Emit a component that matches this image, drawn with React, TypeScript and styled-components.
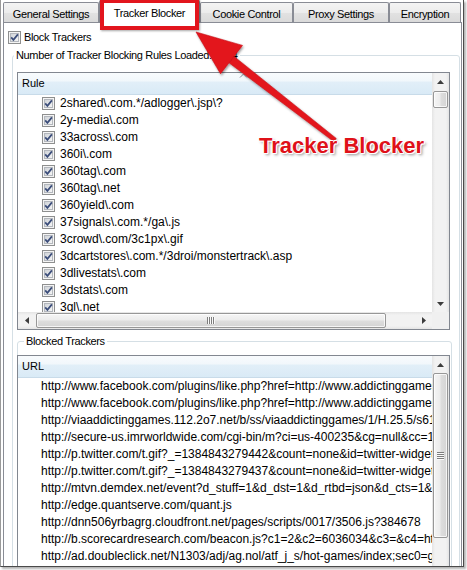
import React, { useId } from "react";
import styled, { createGlobalStyle } from "styled-components";

const UI_FONT = `"Liberation Sans", Arial, sans-serif`;

const GlobalStyle = createGlobalStyle`
  html, body { margin: 0; padding: 0; background: #fff; }
  body { font-family: ${UI_FONT}; font-size: 11px; letter-spacing: -0.35px; color: #000; }
  * { box-sizing: border-box; }
`;

const Stage = styled.div`
  position: relative;
  width: 467px;
  height: 570px;
  overflow: hidden;
  background: #fff;
`;

const Frame = styled.div`
  position: relative;
  z-index: 0;
  width: 464px;
  height: 567px;
  border-left: 1px solid #9a9a9a;
  border-right: 1px solid #4a4a4a;
  border-bottom: 1px solid #4a4a4a;
  background: #fff;
  box-shadow: 2px 2px 2px rgba(0, 0, 0, 0.3);
  overflow: hidden;
  display: flex;
  flex-direction: column;
`;

const TabStrip = styled.div`
  display: flex;
  align-items: flex-start;
  height: 22px;
  padding-left: 2px;
  position: relative;
  z-index: 1;
  flex: none;
`;

const Tab = styled.div<{ $w: number; $active?: boolean }>`
  flex: none;
  width: ${(p) => p.$w}px;
  height: ${(p) => (p.$active ? 23 : 20)}px;
  margin-top: ${(p) => (p.$active ? 0 : 2)}px;
  padding-top: ${(p) => (p.$active ? 1 : 2)}px;
  border: 1px solid #898c95;
  border-bottom: none;
  border-radius: 2px 2px 0 0;
  background: ${(p) =>
    p.$active
      ? "#fff"
      : "linear-gradient(#f4f4f4 0%, #ececec 50%, #e2e2e2 51%, #dadada 100%)"};
  display: flex;
  align-items: center;
  justify-content: center;
  white-space: nowrap;
`;

const Panel = styled.div`
  flex: none;
  height: 620px;
  margin: 0 1px 0 2px;
  border: 1px solid #898c95;
  background: #fff;
  padding: 8px 0 0 4px;
`;

const CheckRow = styled.label`
  display: flex;
  align-items: center;
  gap: 3px;
  height: 13px;
  line-height: 13px;
`;

const GroupBox = styled.fieldset`
  margin: 4px 0 0 4px;
  width: 448px;
  min-width: 0;
  border: 1px solid #d5dfe5;
  border-radius: 3px;
  padding: 9px 9px 0 4px;
`;

const GroupLegend = styled.legend<{ $indent: number }>`
  margin-left: ${(p) => p.$indent}px;
  padding: 0 2px;
  height: 15px;
  line-height: 15px;
`;

const SubGroup = styled.fieldset`
  margin: 4px 0 0 0;
  width: 435px;
  min-width: 0;
  border: 1px solid #d5dfe5;
  border-radius: 3px;
  padding: 6px 0 0 0;
`;

const ListBox = styled.div<{ $h: number; $hscroll?: boolean; $shift?: number }>`
  width: 433px;
  height: ${(p) => p.$h}px;
  margin-left: ${(p) => p.$shift ?? 0}px;
  border: 1px solid #828790;
  background: #fff;
  display: grid;
  grid-template-columns: minmax(0, 1fr) 17px;
  grid-template-rows: ${(p) => (p.$hscroll ? "minmax(0, 1fr) 17px" : "minmax(0, 1fr)")};
`;

const ListContent = styled.div`
  overflow: hidden;
  min-width: 0;
  min-height: 0;
  font-size: 12px;
  letter-spacing: 0;
`;

const ColumnHeader = styled.div`
  position: relative;
  height: 22px;
  padding-left: 4px;
  font-size: 11px;
  line-height: 21px;
  border-bottom: 1px solid #c8dbe9;
  background: linear-gradient(#f8fbfd 0%, #f1f7fb 40%, #e2eff8 41%, #d9eaf6 100%);
  white-space: nowrap;
`;

const SortGlyph = styled.svg`
  position: absolute;
  top: 0;
  left: 221px;
`;

const RuleRow = styled.div`
  display: flex;
  align-items: center;
  gap: 5px;
  height: 17px;
  line-height: 17px;
  padding-left: 24px;
  white-space: nowrap;
`;

const UrlRow = styled.div`
  height: 17px;
  line-height: 17px;
  padding-left: 23px;
  white-space: nowrap;
`;

const VScroll = styled.div`
  display: flex;
  flex-direction: column;
  min-height: 0;
  overflow: hidden;
  background: linear-gradient(90deg, #e4e4e4 0, #f2f2f2 3px, #f2f2f2 14px, #e4e4e4 17px);
`;

const HScroll = styled.div`
  display: flex;
  min-width: 0;
  overflow: hidden;
  background: linear-gradient(#e4e4e4 0, #f2f2f2 3px, #f2f2f2 14px, #e4e4e4 17px);
`;

const Corner = styled.div`
  background: #f0f0f0;
`;

const ScrollButton = styled.div`
  flex: 0 0 17px;
  display: flex;
  align-items: center;
  justify-content: center;
`;

const Spacer = styled.div`
  flex: 1;
`;

const VThumb = styled.div<{ $offset: number; $size: number }>`
  flex: none;
  margin: ${(p) => p.$offset}px 1px 0;
  height: ${(p) => p.$size}px;
  border: 1px solid #979797;
  border-radius: 2px;
  background: linear-gradient(90deg, #f5f5f5 0%, #ececec 45%, #dddddd 55%, #d4d4d4 100%);
  box-shadow: inset 0 0 0 1px rgba(255, 255, 255, 0.75);
  display: flex;
  align-items: center;
  justify-content: center;
`;

const HThumb = styled.div<{ $offset: number; $size: number }>`
  flex: none;
  margin: 1px 0 1px ${(p) => p.$offset}px;
  width: ${(p) => p.$size}px;
  border: 1px solid #979797;
  border-radius: 2px;
  background: linear-gradient(#f5f5f5 0%, #ececec 45%, #dddddd 55%, #d4d4d4 100%);
  box-shadow: inset 0 0 0 1px rgba(255, 255, 255, 0.75);
  display: flex;
  align-items: center;
  justify-content: center;
`;

const RedBox = styled.div`
  position: absolute;
  z-index: 2;
  left: 100px;
  top: -1px;
  width: 99px;
  height: 31px;
  border: 4px solid #e2151d;
  box-shadow: 1px 1px 2px rgba(0, 0, 0, 0.35);
  pointer-events: none;
`;

const ArrowLayer = styled.svg`
  position: absolute;
  z-index: 2;
  left: 0;
  top: 0;
  pointer-events: none;
`;

const Callout = styled.div`
  position: absolute;
  z-index: 3;
  left: 259px;
  top: 135px;
  font-family: "Liberation Sans", Arial, sans-serif;
  font-weight: bold;
  font-size: 22px;
  line-height: 22px;
  letter-spacing: 0;
  color: #df1119;
  white-space: nowrap;
  text-shadow: 1px 0 0 #fff, -1px 0 0 #fff, 0 1px 0 #fff, 0 -1px 0 #fff,
    1px 1px 0 #fff, -1px -1px 0 #fff, 2px 2px 3px rgba(0, 0, 0, 0.45);
`;

const rules = [
  "2shared\\.com.*/adlogger\\.jsp\\?",
  "2y-media\\.com",
  "33across\\.com",
  "360i\\.com",
  "360tag\\.com",
  "360tag\\.net",
  "360yield\\.com",
  "37signals\\.com.*/ga\\.js",
  "3crowd\\.com/3c1px\\.gif",
  "3dcartstores\\.com.*/3droi/monstertrack\\.asp",
  "3dlivestats\\.com",
  "3dstats\\.com",
  "3gl\\.net",
];

const urls = [
  "http://www.facebook.com/plugins/like.php?href=http://www.addictinggames.com/&layout=button_count",
  "http://www.facebook.com/plugins/like.php?href=http://www.addictinggames.com/&send=false",
  "http://viaaddictinggames.112.2o7.net/b/ss/viaaddictinggames/1/H.25.5/s61234",
  "http://secure-us.imrworldwide.com/cgi-bin/m?ci=us-400235&cg=null&cc=1",
  "http://p.twitter.com/t.gif?_=1384843279442&count=none&id=twitter-widget-0",
  "http://p.twitter.com/t.gif?_=1384843279437&count=none&id=twitter-widget-1",
  "http://mtvn.demdex.net/event?d_stuff=1&d_dst=1&d_rtbd=json&d_cts=1&d_cb=x",
  "http://edge.quantserve.com/quant.js",
  "http://dnn506yrbagrg.cloudfront.net/pages/scripts/0017/3506.js?384678",
  "http://b.scorecardresearch.com/beacon.js?c1=2&c2=6036034&c3=&c4=http",
  "http://ad.doubleclick.net/N1303/adj/ag.nol/atf_j_s/hot-games/index;sec0=games",
];

const tabs = [
  { label: "General Settings", w: 96 },
  { label: "Tracker Blocker", w: 101, active: true },
  { label: "Cookie Control", w: 93 },
  { label: "Proxy Settings", w: 96 },
  { label: "Encryption", w: 72 },
];

function CheckBox() {
  const id = useId().replace(/:/g, "");
  return (
    <svg width="13" height="13" viewBox="0 0 13 13" style={{ flex: "none" }}>
      <defs>
        <linearGradient id={`cb${id}`} x1="0" y1="0" x2="1" y2="1">
          <stop offset="0" stopColor="#cdd1d6" />
          <stop offset="1" stopColor="#f7f7f7" />
        </linearGradient>
      </defs>
      <rect x="0.5" y="0.5" width="12" height="12" fill="#f4f4f4" stroke="#8e8f8f" />
      <rect x="2.5" y="2.5" width="8" height="8" fill={`url(#cb${id})`} stroke="#b3b7bd" />
      <path d="M3.2 6.4 L5.4 8.9 L9.9 3.4" fill="none" stroke="#3b4d7a" strokeWidth="1.7" />
    </svg>
  );
}

function Tri({ dir }: { dir: "up" | "down" | "left" | "right" }) {
  const pts = {
    up: "0,4 3.5,0 7,4",
    down: "0,0 7,0 3.5,4",
    left: "4,0 4,7 0,3.5",
    right: "0,0 0,7 4,3.5",
  }[dir];
  const horiz = dir === "left" || dir === "right";
  return (
    <svg width={horiz ? 4 : 7} height={horiz ? 7 : 4} viewBox={horiz ? "0 0 4 7" : "0 0 7 4"}>
      <polygon points={pts} fill="#3c3c3c" />
    </svg>
  );
}

function GripV() {
  return (
    <svg width="7" height="8" viewBox="0 0 7 8">
      {[0, 2, 4, 6].map((y) => (
        <g key={y}>
          <rect x="0" y={y} width="7" height="1" fill="#7d7d7d" />
          <rect x="0" y={y + 1} width="7" height="1" fill="#fafafa" />
        </g>
      ))}
    </svg>
  );
}

function GripH() {
  return (
    <svg width="8" height="7" viewBox="0 0 8 7">
      {[0, 2, 4, 6].map((x) => (
        <g key={x}>
          <rect x={x} y="0" width="1" height="7" fill="#7d7d7d" />
          <rect x={x + 1} y="0" width="1" height="7" fill="#fafafa" />
        </g>
      ))}
    </svg>
  );
}

function VScrollBar({ offset, size, grip }: { offset: number; size: number; grip?: boolean }) {
  return (
    <VScroll>
      <ScrollButton>
        <Tri dir="up" />
      </ScrollButton>
      <VThumb $offset={offset} $size={size}>{grip && <GripV />}</VThumb>
      <Spacer />
      <ScrollButton>
        <Tri dir="down" />
      </ScrollButton>
    </VScroll>
  );
}

function HScrollBar({ offset, size }: { offset: number; size: number }) {
  return (
    <HScroll>
      <ScrollButton>
        <Tri dir="left" />
      </ScrollButton>
      <HThumb $offset={offset} $size={size}>
        <GripH />
      </HThumb>
      <Spacer />
      <ScrollButton>
        <Tri dir="right" />
      </ScrollButton>
    </HScroll>
  );
}

export default function App() {
  return (
    <>
      <GlobalStyle />
      <Stage>
        <Frame>
          <TabStrip>
            {tabs.map((t) => (
              <Tab key={t.label} $w={t.w} $active={t.active}>
                {t.label}
              </Tab>
            ))}
          </TabStrip>
          <Panel>
            <CheckRow>
              <CheckBox />
              Block Trackers
            </CheckRow>
            <GroupBox>
              <GroupLegend $indent={-3}>Number of Tracker Blocking Rules Loaded: 3704</GroupLegend>
              <ListBox $h={258} $hscroll>
                <ListContent>
                  <ColumnHeader>
                    Rule
                    <SortGlyph width="9" height="5" viewBox="0 0 9 5">
                      <polyline points="1,4.5 4.5,1 8,4.5" fill="none" stroke="#7a8a99" strokeWidth="1" />
                    </SortGlyph>
                  </ColumnHeader>
                  {rules.map((r) => (
                    <RuleRow key={r}>
                      <CheckBox />
                      {r}
                    </RuleRow>
                  ))}
                </ListContent>
                <VScrollBar offset={1} size={17} />
                <HScrollBar offset={1} size={350} />
                <Corner />
              </ListBox>
              <SubGroup>
                <GroupLegend $indent={6}>Blocked Trackers</GroupLegend>
                <ListBox $h={240} $shift={-1}>
                  <ListContent>
                    <ColumnHeader>URL</ColumnHeader>
                    {urls.map((u, i) => (
                      <UrlRow key={i}>{u}</UrlRow>
                    ))}
                  </ListContent>
                  <VScrollBar offset={0} size={165} grip />
                </ListBox>
              </SubGroup>
            </GroupBox>
          </Panel>
        </Frame>
        <RedBox />
        <ArrowLayer width="467" height="570" viewBox="0 0 467 570">
          <defs>
            <filter id="arrowShadow" x="-20%" y="-20%" width="140%" height="140%">
              <feDropShadow dx="1" dy="1.5" stdDeviation="1" floodColor="#000" floodOpacity="0.4" />
            </filter>
          </defs>
          <g filter="url(#arrowShadow)" fill="#e3141c" stroke="#c80d14" strokeWidth="0.6">
            <polygon points="229,62.8 234,56.4 336.2,138.4 333.8,141.6" />
            <polygon points="196,32 242.5,45.4 220.5,73.8" />
          </g>
        </ArrowLayer>
        <Callout>Tracker Blocker</Callout>
      </Stage>
    </>
  );
}
